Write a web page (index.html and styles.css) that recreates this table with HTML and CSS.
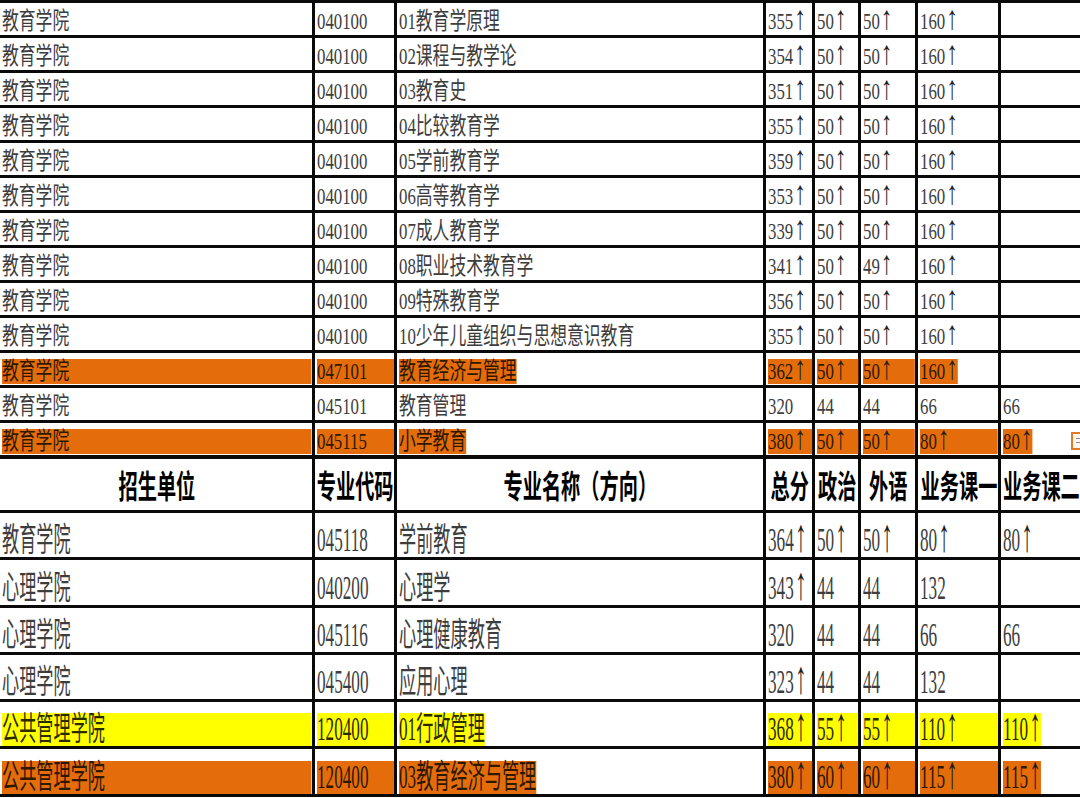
FILE: index.html
```html
<!DOCTYPE html>
<html lang="zh-CN">
<head>
<meta charset="utf-8">
<title>招生分数线</title>
<link rel="stylesheet" href="styles.css">
</head>
<body>
<table class="sheet">
  <colgroup>
    <col class="c1"><col class="c2"><col class="c3"><col class="c4"><col class="c5"><col class="c6"><col class="c7"><col class="c8">
  </colgroup>
  <tbody class="up">
    <tr><td><span class="t">教育学院</span></td><td><span class="t">040100</span></td><td><span class="t">01教育学原理</span></td><td><span class="t">355<span class="ar">↑</span></span></td><td><span class="t">50<span class="ar">↑</span></span></td><td><span class="t">50<span class="ar">↑</span></span></td><td><span class="t">160<span class="ar">↑</span></span></td><td></td></tr>
    <tr><td><span class="t">教育学院</span></td><td><span class="t">040100</span></td><td><span class="t">02课程与教学论</span></td><td><span class="t">354<span class="ar">↑</span></span></td><td><span class="t">50<span class="ar">↑</span></span></td><td><span class="t">50<span class="ar">↑</span></span></td><td><span class="t">160<span class="ar">↑</span></span></td><td></td></tr>
    <tr><td><span class="t">教育学院</span></td><td><span class="t">040100</span></td><td><span class="t">03教育史</span></td><td><span class="t">351<span class="ar">↑</span></span></td><td><span class="t">50<span class="ar">↑</span></span></td><td><span class="t">50<span class="ar">↑</span></span></td><td><span class="t">160<span class="ar">↑</span></span></td><td></td></tr>
    <tr><td><span class="t">教育学院</span></td><td><span class="t">040100</span></td><td><span class="t">04比较教育学</span></td><td><span class="t">355<span class="ar">↑</span></span></td><td><span class="t">50<span class="ar">↑</span></span></td><td><span class="t">50<span class="ar">↑</span></span></td><td><span class="t">160<span class="ar">↑</span></span></td><td></td></tr>
    <tr><td><span class="t">教育学院</span></td><td><span class="t">040100</span></td><td><span class="t">05学前教育学</span></td><td><span class="t">359<span class="ar">↑</span></span></td><td><span class="t">50<span class="ar">↑</span></span></td><td><span class="t">50<span class="ar">↑</span></span></td><td><span class="t">160<span class="ar">↑</span></span></td><td></td></tr>
    <tr><td><span class="t">教育学院</span></td><td><span class="t">040100</span></td><td><span class="t">06高等教育学</span></td><td><span class="t">353<span class="ar">↑</span></span></td><td><span class="t">50<span class="ar">↑</span></span></td><td><span class="t">50<span class="ar">↑</span></span></td><td><span class="t">160<span class="ar">↑</span></span></td><td></td></tr>
    <tr><td><span class="t">教育学院</span></td><td><span class="t">040100</span></td><td><span class="t">07成人教育学</span></td><td><span class="t">339<span class="ar">↑</span></span></td><td><span class="t">50<span class="ar">↑</span></span></td><td><span class="t">50<span class="ar">↑</span></span></td><td><span class="t">160<span class="ar">↑</span></span></td><td></td></tr>
    <tr><td><span class="t">教育学院</span></td><td><span class="t">040100</span></td><td><span class="t">08职业技术教育学</span></td><td><span class="t">341<span class="ar">↑</span></span></td><td><span class="t">50<span class="ar">↑</span></span></td><td><span class="t">49<span class="ar">↑</span></span></td><td><span class="t">160<span class="ar">↑</span></span></td><td></td></tr>
    <tr><td><span class="t">教育学院</span></td><td><span class="t">040100</span></td><td><span class="t">09特殊教育学</span></td><td><span class="t">356<span class="ar">↑</span></span></td><td><span class="t">50<span class="ar">↑</span></span></td><td><span class="t">50<span class="ar">↑</span></span></td><td><span class="t">160<span class="ar">↑</span></span></td><td></td></tr>
    <tr><td><span class="t">教育学院</span></td><td><span class="t">040100</span></td><td><span class="t">10少年儿童组织与思想意识教育</span></td><td><span class="t">355<span class="ar">↑</span></span></td><td><span class="t">50<span class="ar">↑</span></span></td><td><span class="t">50<span class="ar">↑</span></span></td><td><span class="t">160<span class="ar">↑</span></span></td><td></td></tr>
    <tr><td><span class="t hl-o full">教育学院</span></td><td><span class="t hl-o full">047101</span></td><td><span class="t hl-o">教育经济与管理</span></td><td><span class="t hl-o full">362<span class="ar">↑</span></span></td><td><span class="t hl-o full">50<span class="ar">↑</span></span></td><td><span class="t hl-o full">50<span class="ar">↑</span></span></td><td><span class="t hl-o">160<span class="ar">↑</span></span></td><td></td></tr>
    <tr><td><span class="t">教育学院</span></td><td><span class="t">045101</span></td><td><span class="t">教育管理</span></td><td><span class="t">320</span></td><td><span class="t">44</span></td><td><span class="t">44</span></td><td><span class="t">66</span></td><td><span class="t">66</span></td></tr>
    <tr><td><span class="t hl-o full">教育学院</span></td><td><span class="t hl-o full">045115</span></td><td><span class="t hl-o">小学教育</span></td><td><span class="t hl-o full">380<span class="ar">↑</span></span></td><td><span class="t hl-o full">50<span class="ar">↑</span></span></td><td><span class="t hl-o full">50<span class="ar">↑</span></span></td><td><span class="t hl-o full">80<span class="ar">↑</span></span></td><td><span class="t hl-o">80<span class="ar">↑</span></span></td></tr>
  </tbody>
  <tbody class="hd">
    <tr><td><span class="t">招生单位</span></td><td><span class="t">专业代码</span></td><td><span class="t">专业名称（方向）</span></td><td><span class="t">总分</span></td><td><span class="t">政治</span></td><td><span class="t">外语</span></td><td><span class="t">业务课一</span></td><td class="hd-last"><span class="t">业务课二</span></td></tr>
  </tbody>
  <tbody class="lo">
    <tr><td><span class="t">教育学院</span></td><td><span class="t">045118</span></td><td><span class="t">学前教育</span></td><td><span class="t">364<span class="ar">↑</span></span></td><td><span class="t">50<span class="ar">↑</span></span></td><td><span class="t">50<span class="ar">↑</span></span></td><td><span class="t">80<span class="ar">↑</span></span></td><td><span class="t">80<span class="ar">↑</span></span></td></tr>
    <tr><td><span class="t">心理学院</span></td><td><span class="t">040200</span></td><td><span class="t">心理学</span></td><td><span class="t">343<span class="ar">↑</span></span></td><td><span class="t">44</span></td><td><span class="t">44</span></td><td><span class="t">132</span></td><td></td></tr>
    <tr><td><span class="t">心理学院</span></td><td><span class="t">045116</span></td><td><span class="t">心理健康教育</span></td><td><span class="t">320</span></td><td><span class="t">44</span></td><td><span class="t">44</span></td><td><span class="t">66</span></td><td><span class="t">66</span></td></tr>
    <tr><td><span class="t">心理学院</span></td><td><span class="t">045400</span></td><td><span class="t">应用心理</span></td><td><span class="t">323<span class="ar">↑</span></span></td><td><span class="t">44</span></td><td><span class="t">44</span></td><td><span class="t">132</span></td><td></td></tr>
    <tr><td><span class="t hl-y full">公共管理学院</span></td><td><span class="t hl-y full">120400</span></td><td><span class="t hl-y">01行政管理</span></td><td><span class="t hl-y full">368<span class="ar">↑</span></span></td><td><span class="t hl-y full">55<span class="ar">↑</span></span></td><td><span class="t hl-y full">55<span class="ar">↑</span></span></td><td><span class="t hl-y full">110<span class="ar">↑</span></span></td><td><span class="t hl-y">110<span class="ar">↑</span></span></td></tr>
    <tr><td><span class="t hl-o full">公共管理学院</span></td><td><span class="t hl-o full">120400</span></td><td><span class="t hl-o">03教育经济与管理</span></td><td><span class="t hl-o full">380<span class="ar">↑</span></span></td><td><span class="t hl-o full">60<span class="ar">↑</span></span></td><td><span class="t hl-o full">60<span class="ar">↑</span></span></td><td><span class="t hl-o full">115<span class="ar">↑</span></span></td><td><span class="t hl-o">115<span class="ar">↑</span></span></td></tr>
  </tbody>
</table>
<div class="paste-icon"><span></span><span></span></div>
</body>
</html>
```

FILE: styles.css
```css
html, body {
  margin: 0;
  padding: 0;
  overflow: hidden;
  background: #ffffff;
}

body {
  width: 1080px;
  height: 798px;
  position: relative;
}

.sheet {
  border-collapse: collapse;
  table-layout: fixed;
  width: 1090px;
  font-family: "Liberation Serif", "Noto Sans CJK SC", serif;
  color: #3d3d3d;
}

.c1 { width: 313px; }
.c2 { width: 82px; }
.c3 { width: 369px; }
.c4 { width: 49px; }
.c5 { width: 46px; }
.c6 { width: 57px; }
.c7 { width: 83px; }
.c8 { width: 91px; }

.sheet td {
  border: 3px solid #0a0a0a;
  padding: 0 0 0 2px;
  white-space: nowrap;
  vertical-align: bottom;
}

.sheet td:first-child {
  border-left: none;
}

.t {
  display: inline-block;
  transform: scaleX(var(--s));
  transform-origin: left bottom;
}

/* the up-arrow: Liberation Serif glyph, enlarged to digit height */
.ar {
  font-size: 1.4em;
  line-height: 0;
  margin-left: 0.04em;
  color: #1e1e1e;
}

.full {
  width: calc(100% / var(--s));
}

.hl-o {
  background: #e46c0a;
  color: #2e1800;
}

.hl-y {
  background: #ffff00;
  color: #2b2b00;
}

/* upper block: compact rows */
.up tr { height: 35px; }
.up td {
  --s: 0.7;
  font-size: 24px;
  line-height: 25px;
  padding-bottom: 1px;
}

/* header row */
.hd tr { height: 55px; }
.hd td {
  --s: 0.6;
  border-top-width: 4px;
  font-size: 32px;
  line-height: 38px;
  font-weight: 700;
  color: #000000;
  vertical-align: middle;
}
.hd .t {
  display: block;
  width: calc(100% / var(--s));
  margin-left: calc(50% - 50% / var(--s));
  text-align: center;
  transform-origin: center;
  font-family: "Noto Sans CJK SC", sans-serif;
}
.hd .hd-last .t {
  margin-left: 0;
  text-align: left;
  transform-origin: left center;
}

/* lower block: taller rows */
.lo tr { height: 47.3px; }
.lo td {
  --s: 0.52;
  font-size: 33px;
  line-height: 33px;
}

/* Excel paste-options tag peeking at the right edge */
.paste-icon {
  position: absolute;
  left: 1071px;
  top: 432px;
  width: 12px;
  height: 18px;
  border: 2px solid #e07a2a;
  background: #fff7ef;
  display: flex;
  flex-direction: column;
  gap: 3px;
  padding: 4px 0 0 3px;
  box-sizing: border-box;
}
.paste-icon span {
  display: block;
  width: 8px;
  height: 1px;
  background: #8a8a8a;
}
```
